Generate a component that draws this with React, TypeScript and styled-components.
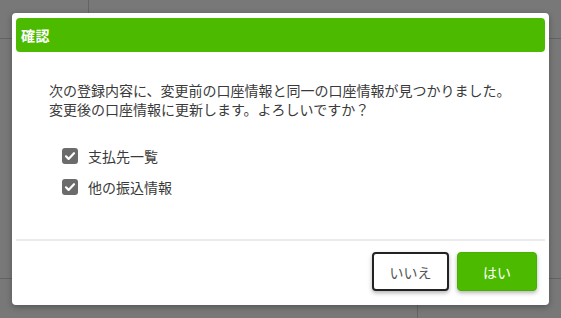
import React from 'react'
import styled, { createGlobalStyle } from 'styled-components'

const GlobalStyle = createGlobalStyle`
  html, body {
    margin: 0;
    padding: 0;
    width: 561px;
    height: 318px;
    overflow: hidden;
    font-family: "Noto Sans CJK JP", "Noto Sans", sans-serif;
  }
`

const Screen = styled.div`
  position: relative;
  width: 561px;
  height: 318px;
  background: #fff;
`

// dimmed page behind the dialog
const BehindPage = styled.div`
  display: flex;
  flex-direction: column;
  height: 100%;
`

const BehindTop = styled.div`
  display: flex;
  height: 38px;
  border-bottom: 1px solid #d4d4d4;
`

const BehindCell = styled.div<{ $w: number }>`
  width: ${props => props.$w}px;
  border-right: 1px solid #d4d4d4;
`

const BehindMiddle = styled.div`
  flex: 1;
`

const BehindBottom = styled.div`
  display: flex;
  height: 39px;
  border-top: 1px solid #d4d4d4;
`

const Overlay = styled.div`
  position: absolute;
  inset: 0;
  background: rgba(0, 0, 0, 0.53);
  display: flex;
  padding: 13px 12px;
  box-sizing: border-box;
`

const Dialog = styled.div`
  width: 537px;
  height: 292px;
  background: #fff;
  border-radius: 4px;
  box-shadow: 0 2px 6px rgba(0, 0, 0, 0.3);
  display: flex;
  flex-direction: column;
  padding: 5px 4px 0;
  box-sizing: border-box;
`

const Header = styled.div`
  height: 34px;
  background: #4cbb00;
  border-radius: 4px;
  display: flex;
  align-items: center;
  padding-left: 5px;
`

const Title = styled.h2`
  margin: 0;
  color: #fff;
  font-size: 14px;
  font-weight: 700;
  letter-spacing: 0.5px;
`

const Body = styled.div`
  flex: 1;
  padding: 29px 0 0 33px;
`

const Message = styled.p`
  margin: 0;
  color: #3a3a3a;
  font-size: 14px;
  line-height: 19px;
`

const CheckList = styled.div`
  display: flex;
  flex-direction: column;
  gap: 15px;
  margin: 29px 0 0 13px;
`

const CheckRow = styled.label`
  display: flex;
  align-items: center;
  gap: 10px;
  color: #3a3a3a;
  font-size: 14px;
  line-height: 16px;
`

const Box = styled.span`
  width: 16px;
  height: 16px;
  border-radius: 3px;
  background: #6b6b6b;
  display: flex;
  align-items: center;
  justify-content: center;
`

const Divider = styled.hr`
  margin: 0;
  border: none;
  border-top: 2px solid #ebebeb;
`

const Footer = styled.div`
  display: flex;
  justify-content: flex-end;
  gap: 8px;
  padding: 11px 8px 14px;
`

const Button = styled.button<{ $primary?: boolean }>`
  height: 39px;
  width: ${props => (props.$primary ? 80 : 77)}px;
  box-sizing: border-box;
  border-radius: 4px;
  border: ${props => (props.$primary ? '1px solid #47b000' : '2px solid #222')};
  background: ${props => (props.$primary ? '#4cbb00' : '#fff')};
  color: ${props => (props.$primary ? '#fff' : '#555')};
  font-family: "Noto Sans CJK JP", "Noto Sans", sans-serif;
  font-size: 14px;
  box-shadow: 0 2px 4px rgba(0, 0, 0, 0.3);
  cursor: pointer;
`

const Check = () => (
  <svg width="12" height="12" viewBox="0 0 12 12">
    <path d="M2 6.3l2.6 2.6L10 3.2" fill="none" stroke="#fff" strokeWidth="2.2" strokeLinecap="round" strokeLinejoin="round" />
  </svg>
)

const items = ['支払先一覧', '他の振込情報']

const App: React.FC = () => {
  return (
    <>
      <GlobalStyle />
      <Screen>
        <BehindPage>
          <BehindTop>
            <BehindCell $w={88} />
          </BehindTop>
          <BehindMiddle />
          <BehindBottom>
            <BehindCell $w={417} />
          </BehindBottom>
        </BehindPage>
        <Overlay>
          <Dialog>
            <Header>
              <Title>確認</Title>
            </Header>
            <Body>
              <Message>
                次の登録内容に、変更前の口座情報と同一の口座情報が見つかりました。
                <br />
                変更後の口座情報に更新します。よろしいですか？
              </Message>
              <CheckList>
                {items.map(item => (
                  <CheckRow key={item}>
                    <Box>
                      <Check />
                    </Box>
                    {item}
                  </CheckRow>
                ))}
              </CheckList>
            </Body>
            <Divider />
            <Footer>
              <Button>いいえ</Button>
              <Button $primary>はい</Button>
            </Footer>
          </Dialog>
        </Overlay>
      </Screen>
    </>
  )
}

export default App
